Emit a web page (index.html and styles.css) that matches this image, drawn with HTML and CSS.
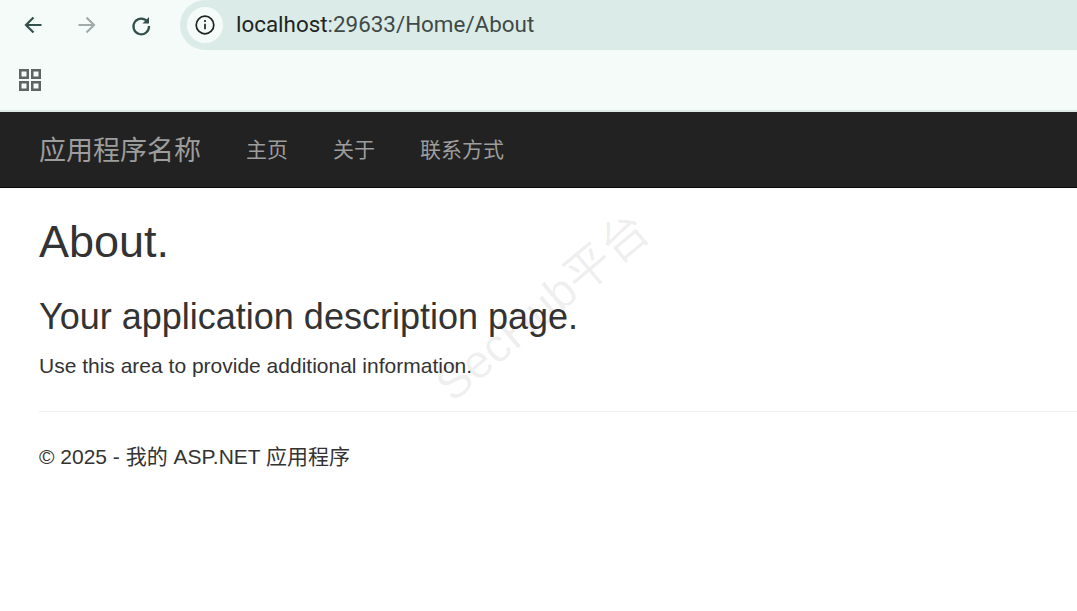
FILE: index.html
```html
<!DOCTYPE html>
<html lang="zh-CN">
<head>
  <meta charset="UTF-8" />
  <title>About</title>
  <link rel="stylesheet" href="styles.css">
</head>
<body>

  <div class="browser-bar">
    <div class="tool-row">
      <svg class="tool-icon" viewBox="0 0 24 24" width="24" height="24"><path d="M20.500 12H5M12.500 4.500L5 12l7.500 7.500" fill="none" stroke="#33504c" stroke-width="2.200"/></svg>
      <svg class="tool-icon" viewBox="0 0 24 24" width="24" height="24"><path d="M3.500 12H19M11.500 4.500L19 12l-7.500 7.500" fill="none" stroke="#a3abaa" stroke-width="2.200"/></svg>
      <svg class="tool-icon" viewBox="0 0 24 24" width="24" height="24"><path d="M18.600 9A7.800 7.800 0 1 0 20 13" fill="none" stroke="#33504c" stroke-width="2.200"/><path d="M20 4v6.500h-6.500z" fill="#33504c"/></svg>
      <div class="address">
        <span class="info-badge">
          <svg viewBox="0 0 20 20" width="20" height="20"><circle cx="10" cy="10" r="8.800" fill="none" stroke="#1f2422" stroke-width="1.700"/><path d="M10 8.800v5.500" stroke="#1f2422" stroke-width="1.700"/><circle cx="10" cy="6" r="1.100" fill="#1f2422"/></svg>
        </span>
        <span class="url">localhost<span class="url-path">:29633/Home/About</span></span>
      </div>
    </div>
    <div class="bookmark-row">
      <svg viewBox="0 0 22 22" width="22" height="22"><path d="M1.250 1.250h7.500v7.500h-7.500zM13.250 1.250h7.500v7.500h-7.500zM1.250 13.250h7.500v7.500h-7.500zM13.250 13.250h7.500v7.500h-7.500z" fill="none" stroke="#5f6563" stroke-width="2.500"/></svg>
    </div>
  </div>

  <div class="navbar">
    <a class="brand" href="#">应用程序名称</a>
    <a class="nav-link" href="#">主页</a>
    <a class="nav-link" href="#">关于</a>
    <a class="nav-link" href="#">联系方式</a>
  </div>

  <div class="content">
    <h2>About.</h2>
    <h3>Your application description page.</h3>
    <p>Use this area to provide additional information.</p>
    <hr />
    <footer>© 2025 - 我的 ASP.NET 应用程序</footer>
  </div>

  <div class="watermark">SecHub平台</div>

</body>
</html>
```

FILE: styles.css
```css
* {
  margin: 0;
  padding: 0;
  box-sizing: border-box;
}

html, body {
  height: 100%;
  overflow: hidden;
}

body {
  font-family: "Liberation Sans", "Noto Sans CJK SC", sans-serif;
  background-color: #fff;
  color: #333;
  position: relative;
}

.browser-bar {
  height: 112px;
  background-color: #f5fbf9;
  border-bottom: 2px solid #dfe9e6;
}

.tool-row {
  display: flex;
  align-items: center;
  height: 50px;
  padding-left: 21px;
}

.tool-icon {
  margin-right: 30px;
}

.address {
  flex: 1;
  height: 50px;
  margin-left: -3px;
  padding-left: 7px;
  display: flex;
  align-items: center;
  background-color: #dbece8;
  border-radius: 25px 0 0 25px;
}

.info-badge {
  width: 36px;
  height: 36px;
  border-radius: 50%;
  background-color: #f5fbf9;
  display: flex;
  align-items: center;
  justify-content: center;
}

.url {
  margin-left: 13px;
  margin-top: -2px;
  font-family: Roboto, sans-serif;
  font-size: 22.4px;
  color: #1f2422;
}

.url-path {
  color: #3f4a47;
}

.bookmark-row {
  height: 60px;
  padding: 19px 0 0 19px;
}

.navbar {
  height: 76px;
  background-color: #222;
  border-bottom: 1px solid #080808;
  padding: 0 0 3px 39px;
  display: flex;
  align-items: center;
}

.navbar a {
  color: #9d9d9d;
  text-decoration: none;
}

.brand {
  font-size: 27px;
  margin-right: 45px;
}

.nav-link {
  font-size: 21px;
  margin-right: 45px;
}

.content {
  padding: 29px 0 0 39px;
}

h2 {
  font-size: 45px;
  font-weight: 400;
  line-height: 49px;
}

h3 {
  font-size: 36px;
  font-weight: 400;
  line-height: 40px;
  margin-top: 31px;
}

p {
  font-size: 21px;
  line-height: 30px;
  margin-top: 14px;
}

hr {
  border: none;
  border-top: 1px solid #eee;
  margin-top: 30px;
}

footer {
  font-size: 21px;
  line-height: 30px;
  margin-top: 30px;
}

.watermark {
  position: absolute;
  left: 409px;
  top: 269px;
  font-size: 47px;
  color: rgba(0, 0, 0, 0.07);
  transform: rotate(-40deg);
  white-space: nowrap;
  pointer-events: none;
}
```
